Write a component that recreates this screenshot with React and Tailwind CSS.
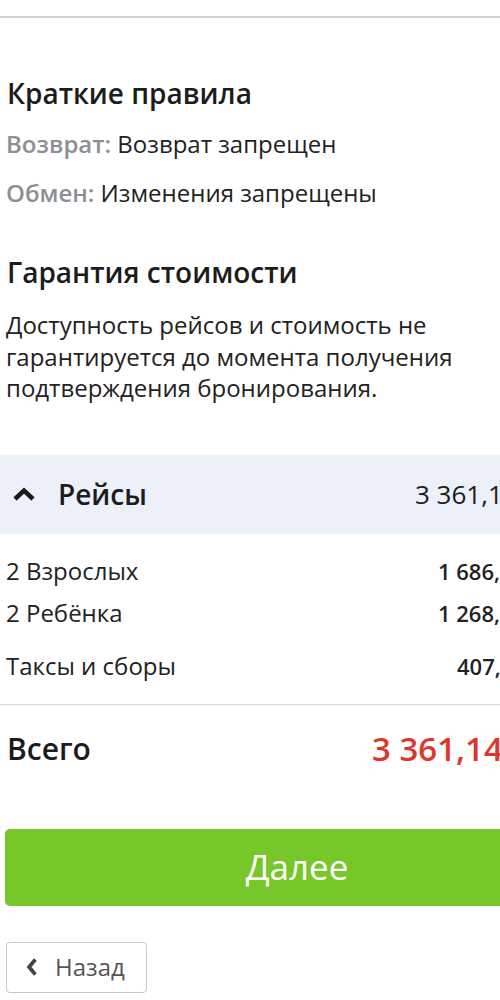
function Rule({ label, value, className = '' }) {
  return (
    <p className={`text-[24px] leading-[32px] text-[#222] ${className}`}>
      <span className="font-semibold text-[#8b9097]">{label}</span> {value}
    </p>
  );
}

function PriceRow({ label, value, width, className = '' }) {
  return (
    <div className={`flex items-center leading-[32px] text-[#222] ${className}`}>
      <span className="flex-1 pl-[6px] text-[24px]">{label}</span>
      <span className={`shrink-0 text-[22px] font-semibold ${width}`}>{value}</span>
    </div>
  );
}

export default function App() {
  return (
    <div className="w-[500px] min-h-[1000px] overflow-hidden bg-white" style={{ fontFamily: '"Open Sans", "Noto Sans", sans-serif' }}>
      <div className="w-[594px]">
        <div className="mt-[16px] h-[2px] bg-[#cfcfcf]" />

        <div className="px-[6px]">
          <h2 className="mt-[59px] pl-[1px] text-[28px] leading-[32px] font-semibold text-[#1c1c1c]">Краткие правила</h2>
          <Rule className="mt-[19px]" label="Возврат:" value="Возврат запрещен" />
          <Rule className="mt-[17px]" label="Обмен:" value="Изменения запрещены" />

          <h2 className="mt-[47px] pl-[1px] text-[28px] leading-[32px] font-semibold text-[#1c1c1c]">Гарантия стоимости</h2>
          <p className="mt-[21px] w-[470px] text-[24px] leading-[31.5px] text-[#222]">
            Доступность рейсов и стоимость не гарантируется до момента получения подтверждения бронирования.
          </p>
        </div>

        <div className="mt-[51px] flex h-[79px] items-center bg-[#ebf0f9]">
          <div className="flex flex-1 items-center">
            <svg viewBox="0 0 24 16" className="ml-[12px] h-[16px] w-[24px]" fill="none" stroke="#1c1c1c" strokeWidth="4.5" strokeLinejoin="miter">
              <polyline points="3,13 12,4.5 21,13" />
            </svg>
            <span className="ml-[22px] text-[28px] font-semibold text-[#1c1c1c]">Рейсы</span>
          </div>
          <span className="w-[179px] shrink-0 text-[26px] text-[#1c1c1c]">3 361,14</span>
        </div>

        <PriceRow className="mt-[21px]" label="2 Взрослых" value="1 686,00" width="w-[156px]" />
        <PriceRow className="mt-[10px]" label="2 Ребёнка" value="1 268,00" width="w-[156px]" />
        <PriceRow className="mt-[21px]" label="Таксы и сборы" value="407,14" width="w-[137px]" />

        <div className="mt-[22px] h-[1px] bg-[#d6d6d6]" />

        <div className="mt-[24px] flex items-center leading-[40px]">
          <span className="flex-1 pl-[7px] text-[30px] font-semibold text-[#1c1c1c]">Всего</span>
          <span className="w-[222px] shrink-0 text-[33px] font-semibold text-[#e0352b]">3 361,14</span>
        </div>

        <div className="px-[5px]">
          <button className="mt-[60px] flex h-[77px] w-full items-center justify-center rounded-[5px] bg-[#77c72a] text-[35px] text-white">
            Далее
          </button>

          <button className="mt-[36px] ml-[1px] flex h-[51px] w-[141px] items-center rounded-[4px] border border-[#c9c9c9] bg-white text-[24px] text-[#555]">
            <svg viewBox="0 0 16 24" className="ml-[18px] h-[20px] w-[14px]" fill="none" stroke="#444" strokeWidth="4.5" strokeLinejoin="miter">
              <polyline points="12,3 4.5,12 12,21" />
            </svg>
            <span className="ml-[16px]">Назад</span>
          </button>
        </div>
      </div>
    </div>
  );
}
